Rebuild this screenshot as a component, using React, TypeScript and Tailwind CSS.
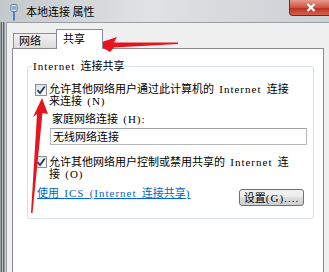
const cjk = "font-['Liberation_Serif','Noto_Sans_CJK_SC',serif]";

function L({ children }: { children: string }) {
  return <span className="tracking-[1px]">{children}</span>;
}

function Check() {
  return (
    <div className="w-[12px] h-[12px] shrink-0 border border-[#8e8f8f] bg-[linear-gradient(135deg,#dcdcdc,#ffffff)] flex items-center justify-center">
      <svg width="10" height="10" viewBox="0 0 10 10">
        <path d="M1.5 5.2 L4 8 L8.8 1.5" fill="none" stroke="#233a78" strokeWidth="1.8" />
      </svg>
    </div>
  );
}

function NetIcon() {
  return (
    <svg width="8" height="17" viewBox="0 0 8 17">
      <rect x="1" y="0.5" width="6" height="7" rx="1" fill="#dfe6ee" stroke="#6b7c90" />
      <rect x="2.5" y="2" width="1" height="4" fill="#3c78c8" />
      <rect x="4.5" y="2" width="1" height="4" fill="#3c78c8" />
      <rect x="3" y="7.5" width="2" height="9" fill="#4a82c9" />
    </svg>
  );
}

export default function App() {
  return (
    <div className={`relative w-[329px] h-[272px] overflow-hidden bg-[#c4c9ce] text-[11px] text-black [word-spacing:2.5px] ${cjk}`}>
      {/* title bar */}
      <div className="h-[22px] flex items-center bg-[linear-gradient(to_right,#c3c8cd,#e0e2e4_45%,#cbd0d4)]">
        <div className="ml-[10px] mt-[3px]">
          <NetIcon />
        </div>
        <div className="ml-[8px] leading-[12px] [word-spacing:0px] font-['Noto_Sans_CJK_SC',sans-serif]">本地连接 属性</div>
        <div className="ml-auto -mr-[3px] self-start w-[43px] h-[16px] rounded-b-[4px] border border-t-0 border-[#6e2a22] bg-[linear-gradient(#e89a8c,#cf5443_50%,#b93222_55%,#d9614a)] flex items-center justify-center">
          <svg width="10" height="9" viewBox="0 0 10 9">
            <path d="M1.5 1 L8.5 8 M8.5 1 L1.5 8" stroke="#ffffff" strokeWidth="2.2" />
          </svg>
        </div>
      </div>

      <div className="flex h-[250px]">
        {/* left window frame */}
        <div className="flex shrink-0">
          <div className="w-px bg-[#a2a5a8]" />
          <div className="w-px bg-[#5b5e61]" />
          <div className="w-px bg-[#c2c4c6]" />
          <div className="w-px bg-[#5f6265]" />
          <div className="w-px bg-[#9b9ea1]" />
          <div className="w-px bg-[#cfd1d3]" />
        </div>

        {/* client area */}
        <div className="flex-1 border-t border-l border-[#9a9fa4] bg-[#f0f0f0] pl-[5px] pt-[6px]">
          {/* tabs */}
          <div className="flex items-end h-[19px] ml-px">
            <div className="w-[44px] h-[15px] border border-b-0 border-[#898c95] bg-[linear-gradient(#f2f2f2,#dcdcdc)] pl-[5px] pt-px leading-[12px]">
              网络
            </div>
            <div className="relative z-10 -ml-px -mb-px w-[47px] h-[20px] border border-b-0 border-[#898c95] bg-white pl-[6px] pt-[3px] leading-[12px]">
              共享
            </div>
          </div>

          {/* panel */}
          <div className="w-[312px] h-[240px] border border-[#898c95] bg-white pl-[14px] pt-[17px]">
            <div className="relative w-[287px] h-[153px] border border-[#d5dfe5] rounded-[3px] pt-[16px]">
              <div className="absolute left-[4px] -top-[7px] px-px bg-white leading-[12px] whitespace-nowrap">
                <L>Internet</L> 连接共享
              </div>

              <div className="flex gap-[2px] pl-[7px] leading-[12px] whitespace-nowrap">
                <div className="mt-px">
                  <Check />
                </div>
                <div>
                  允许其他网络用户通过此计算机的 <L>Internet</L> 连接
                  <br />
                  来连接 <L>(N)</L>
                </div>
              </div>

              <div className="mt-[6px] pl-[24px] leading-[12px] whitespace-nowrap">
                家庭网络连接 <L>(H):</L>
              </div>

              <div className="mt-[3px] ml-[22px] w-[257px] h-[17px] border border-[#b3b6bb] border-t-[#9fa3a8] flex items-center pl-[2px] leading-[12px]">
                无线网络连接
              </div>

              <div className="mt-[11px] flex gap-[2px] pl-[7px] leading-[12px] whitespace-nowrap">
                <Check />
                <div>
                  允许其他网络用户控制或禁用共享的 <L>Internet</L> 连
                  <br />
                  接 <L>(O)</L>
                </div>
              </div>

              <div className="mt-[7px] flex items-start pl-[9px] pr-[9px]">
                <span className="leading-[12px] text-[#0066cc] underline whitespace-nowrap">
                  使用 <L>ICS</L> <L>(Internet</L> 连接共享<L>)</L>
                </span>
                <button className="ml-auto mt-[2px] w-[65px] h-[17px] rounded-[3px] border border-[#707070] bg-[linear-gradient(#f2f2f2,#ebebeb_50%,#dddddd_50%,#cfcfcf)] flex items-center justify-center leading-[12px] whitespace-nowrap">
                  设置<L>(G)....</L>
                </button>
              </div>
            </div>
          </div>
        </div>
      </div>

      {/* red annotation arrows */}
      <svg className="absolute left-0 top-0 pointer-events-none" width="329" height="272" viewBox="0 0 329 272">
        <polygon points="96,44 117,37 114,42.5 178,42.5 178,44 114,47.5 110,52" fill="#e5141d" />
        <polygon points="42,98 48,114 42.5,113 32.5,213 31,213 37,114 33,117" fill="#e5141d" />
      </svg>
    </div>
  );
}
